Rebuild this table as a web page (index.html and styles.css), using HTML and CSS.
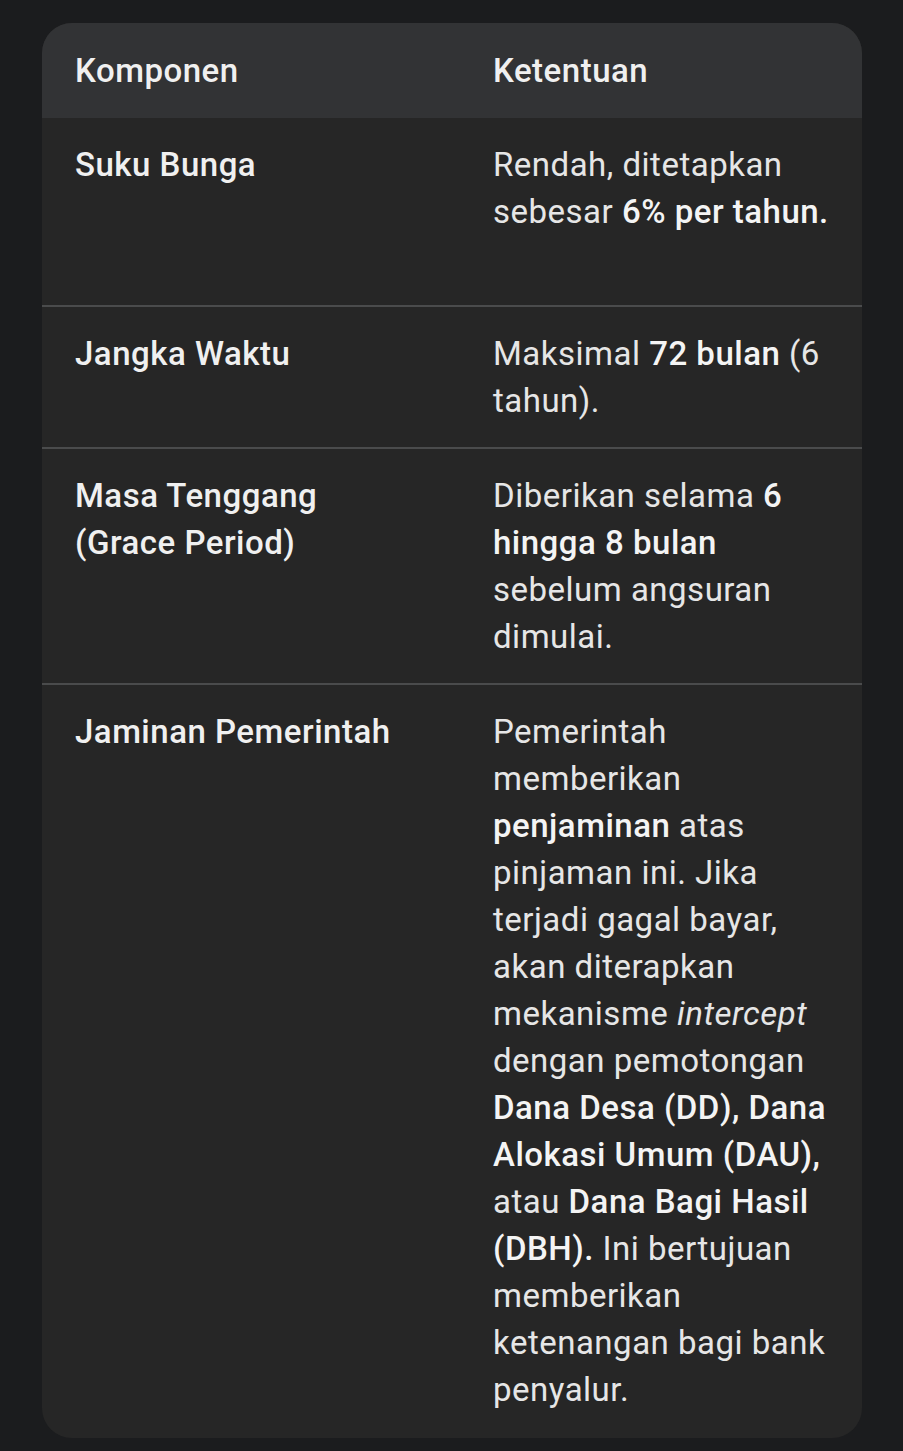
FILE: index.html
```html
<!DOCTYPE html>
<html lang="id">
<head>
<meta charset="utf-8">
<title>Ketentuan</title>
<link rel="stylesheet" href="styles.css">
</head>
<body>
<div class="card">
  <table class="tbl">
    <thead>
      <tr>
        <th class="c1">Komponen</th>
        <th class="c2">Ketentuan</th>
      </tr>
    </thead>
    <tbody>
      <tr>
        <td class="c1 k">Suku Bunga</td>
        <td class="c2 extra">Rendah, ditetapkan sebesar <b>6% per tahun.</b></td>
      </tr>
      <tr>
        <td class="c1 k">Jangka Waktu</td>
        <td class="c2">Maksimal <b>72 bulan</b> (6 tahun).</td>
      </tr>
      <tr>
        <td class="c1 k">Masa Tenggang (Grace Period)</td>
        <td class="c2">Diberikan selama <b>6 hingga 8 bulan</b> sebelum angsuran dimulai.</td>
      </tr>
      <tr class="last">
        <td class="c1 k">Jaminan Pemerintah</td>
        <td class="c2">Pemerintah memberikan <b>penjaminan</b> atas pinjaman ini. Jika terjadi gagal bayar, akan diterapkan mekanisme <i>intercept</i> dengan pemotongan <b>Dana Desa (DD), Dana Alokasi Umum (DAU),</b> atau <b>Dana Bagi Hasil (DBH).</b> Ini bertujuan memberikan ketenangan bagi bank penyalur.</td>
      </tr>
    </tbody>
  </table>
</div>
</body>
</html>
```
FILE: styles.css
```css
html, body {
  margin: 0;
  padding: 0;
  background: #1b1c1e;
}
body {
  padding: 23px 41px 13px 42px;
  font-family: Roboto, "Noto Sans", sans-serif;
  color: #e6e6e6;
}
.card {
  width: 820px;
  background: #262626;
  border-radius: 30px;
  overflow: hidden;
}
.tbl {
  width: 820px;
  border-collapse: collapse;
  table-layout: fixed;
  font-size: 33px;
  line-height: 47px;
  letter-spacing: 0.5px;
}
.tbl th {
  background: #323335;
  font-weight: 500;
  text-align: left;
  padding: 24px 0 24px 33px;
  color: #f0f0f0;
}
.tbl td {
  vertical-align: top;
  padding: 23px 0 23px 33px;
}
.tbl th.c1, .tbl td.c1 {
  width: 385px;
  padding-right: 0;
}
.tbl th.c2, .tbl td.c2 {
  padding-right: 22px;
}
.tbl td.k {
  font-weight: 500;
  color: #f0f0f0;
  padding-right: 56px;
}
.tbl tbody tr + tr td {
  border-top: 2px solid #4a4b4c;
}
.tbl td.extra {
  padding-bottom: 70px;
}
.tbl tr.last td {
  padding-bottom: 25px;
}
b {
  font-weight: 500;
  color: #f4f4f4;
}
i {
  font-style: italic;
}
```
